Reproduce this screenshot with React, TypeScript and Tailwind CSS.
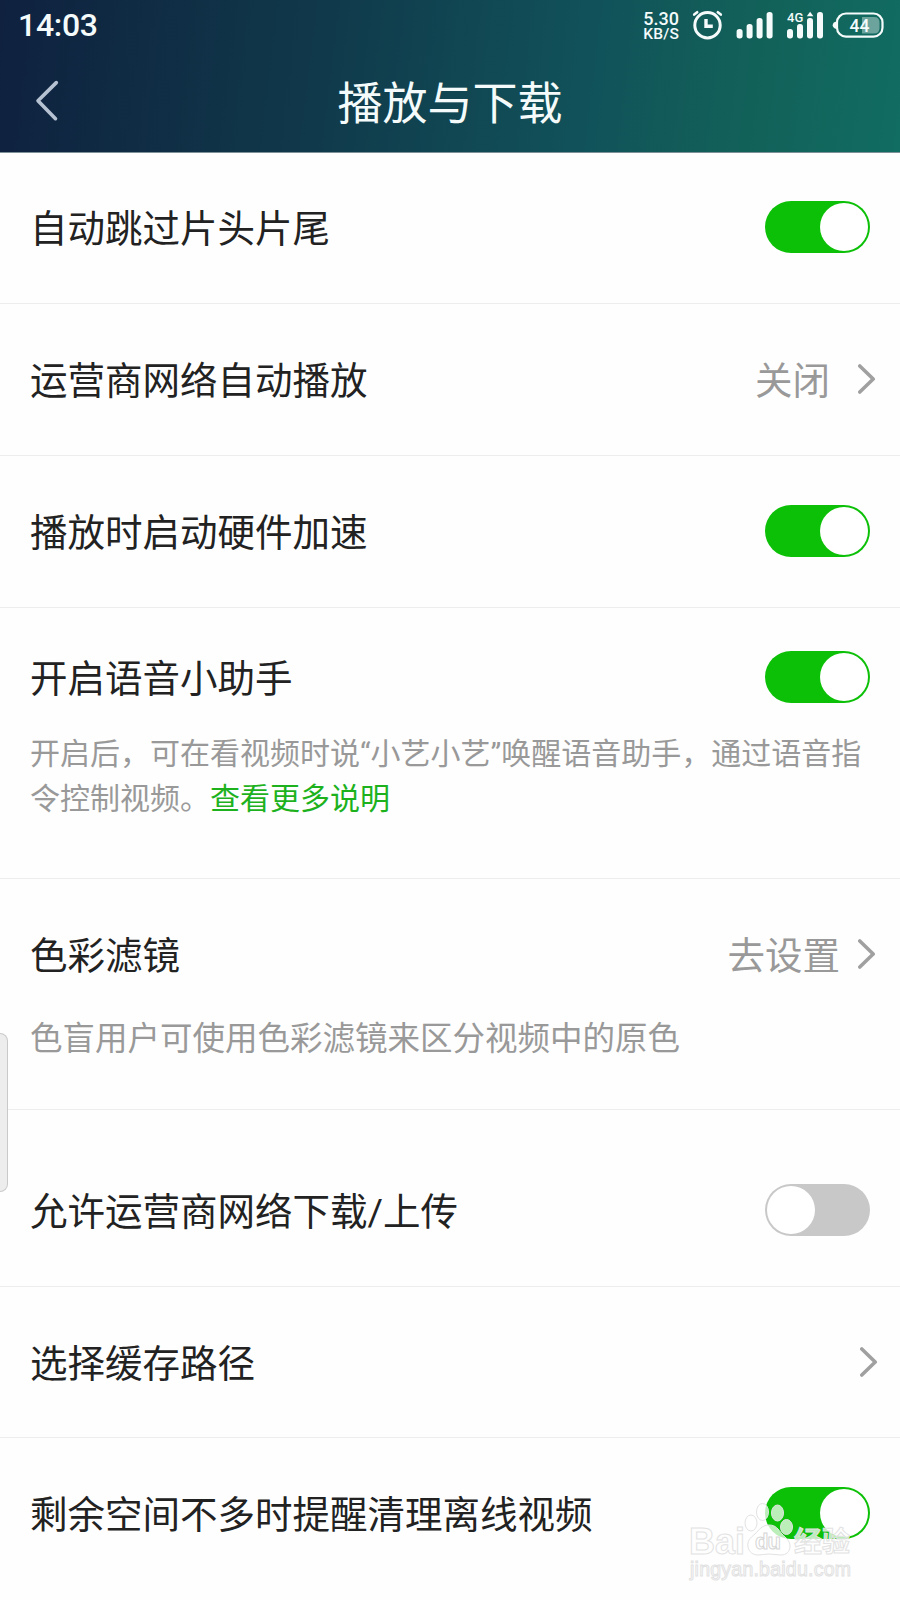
import { useState } from "react";
import type { ReactNode } from "react";

const SIGNAL_BARS = [
  { x: 0, y: 29, height: 9.5 },
  { x: 10, y: 24, height: 14.5 },
  { x: 20, y: 18, height: 20.5 },
  { x: 30, y: 12, height: 26.5 },
];

function Signal({ x }: { x: number }) {
  return (
    <g transform={`translate(${x} 0)`}>
      {SIGNAL_BARS.map((bar) => (
        <rect
          key={bar.x}
          x={bar.x}
          y={bar.y}
          width="6"
          height={bar.height}
          rx="2.7"
        />
      ))}
    </g>
  );
}

function StatusBar() {
  return (
    <div className="flex h-[50px] items-start justify-between pl-[18px]">
      <span className="mt-[6px] text-[32px] leading-[39px] font-medium tracking-[-0.3px]">
        14:03
      </span>
      <div className="flex">
        <div className="mt-[11px] mr-[11px] flex flex-col items-end text-right">
          <span className="text-[18px] leading-[15px] font-medium">5.30</span>
          <span className="text-[15.5px] leading-[16px] font-medium tracking-[0.2px]">
            KB/S
          </span>
        </div>
        <svg width="210" height="50" viewBox="690 0 210 50" fill="#f4fbfa">
          <circle
            cx="707.5"
            cy="25.2"
            r="12.7"
            fill="none"
            stroke="#f4fbfa"
            strokeWidth="3"
          />
          <path
            d="M706 19v7.2h6.800"
            fill="none"
            stroke="#f4fbfa"
            strokeWidth="3.4"
          />
          <path
            d="M694.2 14.6l3-2.4M720.8 14.6l-3-2.4"
            fill="none"
            stroke="#f4fbfa"
            strokeWidth="2.6"
            strokeLinecap="round"
          />
          <Signal x={736.6} />
          <Signal x={787} />
          <path d="M806.8 16.3l3.3-4.6 3.3 4.6z" />
          <text x="787" y="22" fontSize="13" fontWeight="500">
            4G
          </text>
          <rect
            x="837"
            y="13.5"
            width="45.5"
            height="23.2"
            rx="9"
            fill="none"
            stroke="#f4fbfa"
            strokeWidth="2.2"
          />
          <path d="M836.5 21.5v7.5q-3.8-1-3.8-3.8t3.8-3.7z" />
          <path
            d="M862 17h12q5.5 0 5.5 5.5v5.5q0 5.5-5.5 5.5h-12z"
            opacity="0.4"
          />
          <text x="849.5" y="32" fontSize="17.5" fontWeight="500">
            44
          </text>
        </svg>
      </div>
    </div>
  );
}

function Header() {
  return (
    <header className="h-[153px] border-b border-[#7d9298] bg-[linear-gradient(97deg,#0f213f_0%,#10384a_34%,#11525a_65%,#126159_83%,#116c61_100%)] text-[#f4fbfa]">
      <StatusBar />
      <div className="grid h-[102px] grid-cols-[100px_1fr_100px] items-center">
        <button type="button" aria-label="返回" className="pl-[35px]">
          <svg
            width="25"
            height="42"
            viewBox="0 0 25 42"
            fill="none"
            stroke="#b6c2d2"
            strokeWidth="3.6"
            strokeLinecap="round"
            strokeLinejoin="round"
          >
            <path d="M21.3 2.6L3 20.7l17.5 18" />
          </svg>
        </button>
        <h1 className="pt-[8px] text-center text-[45px] leading-[60px]">
          播放与下载
        </h1>
      </div>
    </header>
  );
}

function Toggle({ label, initial }: { label: string; initial: boolean }) {
  const [on, setOn] = useState(initial);
  return (
    <button
      type="button"
      role="switch"
      aria-checked={on}
      aria-label={label}
      onClick={() => setOn(!on)}
      className={`flex h-[52px] w-[105px] shrink-0 items-center rounded-full px-[2px] ${
        on ? "justify-end bg-[#0cc007]" : "justify-start bg-[#c8c8c8]"
      }`}
    >
      <span className="size-[48px] rounded-full bg-white" />
    </button>
  );
}

function Chevron() {
  return (
    <svg
      width="18"
      height="30"
      viewBox="0 0 18 30"
      fill="none"
      stroke="#a0a0a0"
      strokeWidth="3.6"
      strokeLinecap="round"
      strokeLinejoin="round"
    >
      <path d="M1.8 2L15.2 15L1.8 28" />
    </svg>
  );
}

type RowProps = {
  label: string;
  className: string;
  children: ReactNode;
  note?: ReactNode;
};

function Row({ label, className, children, note }: RowProps) {
  return (
    <section className={`border-b border-[#ededed] pl-[30px] ${className}`}>
      <div className="flex h-[52px] items-center justify-between">
        <h2 className="pt-[4px] text-[37.5px] leading-[52px] text-[#222]">
          {label}
        </h2>
        {children}
      </div>
      {note}
    </section>
  );
}

function Watermark() {
  return (
    <svg
      className="pointer-events-none absolute top-[1495px] left-[680px]"
      width="190"
      height="95"
      viewBox="680 1495 190 95"
      fill="#fff"
      fillOpacity="0.72"
      stroke="#e2e2e2"
      strokeWidth="1"
      fontFamily="'Liberation Sans', 'Noto Sans CJK SC', sans-serif"
    >
      <text
        x="689"
        y="1554"
        fontSize="37"
        fontWeight="700"
        textLength="56"
        lengthAdjust="spacingAndGlyphs"
      >
        Bai
      </text>
      <ellipse cx="751" cy="1523" rx="6" ry="8" />
      <ellipse cx="762.5" cy="1512" rx="6" ry="8.5" />
      <ellipse cx="777.5" cy="1513" rx="6" ry="8" />
      <ellipse cx="786.5" cy="1527" rx="6" ry="7.5" />
      <path d="M769 1525c-7 0-10 5-14 9-5 4-8 7-7 13 1 5 5 8 10 8 4 0 7-1 11-1s8 1 12 1c5 0 9-3 9-9 0-5-4-8-8-12-4-5-6-9-13-9z" />
      <text
        x="755"
        y="1549"
        fontSize="22"
        fontWeight="700"
        stroke="#d6d6d6"
        textLength="26"
      >
        du
      </text>
      <text x="794" y="1552" fontSize="28" fontWeight="700">
        经验
      </text>
      <text x="690" y="1576" fontSize="19.5" textLength="161">
        jingyan.baidu.com
      </text>
    </svg>
  );
}

export default function App() {
  return (
    <main
      lang="zh-CN"
      className="relative h-[1600px] w-[900px] overflow-hidden bg-[#fefefe] font-[Roboto,'Noto_Sans_CJK_SC',sans-serif]"
    >
      <Header />

      <Row label="自动跳过片头片尾" className="h-[151px] pt-[48px] pr-[30px]">
        <Toggle label="自动跳过片头片尾" initial={true} />
      </Row>
      <Row label="运营商网络自动播放" className="h-[152px] pt-[49px] pr-[24px]">
        <div className="flex items-center gap-[28px] text-[37.5px] leading-[52px] text-[#999]">
          <span className="pt-[4px]">关闭</span>
          <Chevron />
        </div>
      </Row>
      <Row label="播放时启动硬件加速" className="h-[152px] pt-[49px] pr-[30px]">
        <Toggle label="播放时启动硬件加速" initial={true} />
      </Row>
      <Row
        label="开启语音小助手"
        className="h-[271px] pt-[43px] pr-[30px]"
        note={
          <p className="mt-[28px] text-[30px] leading-[45px] whitespace-nowrap text-[#999]">
            开启后，可在看视频时说“小艺小艺”唤醒语音助手，通过语音指
            <br />
            令控制视频。
            <a href="#more" className="text-[#1db21d]">
              查看更多说明
            </a>
          </p>
        }
      >
        <Toggle label="开启语音小助手" initial={true} />
      </Row>
      <Row
        label="色彩滤镜"
        className="h-[231px] pt-[49px] pr-[24px]"
        note={
          <p className="mt-[37px] text-[32.5px] leading-[45px] text-[#999]">
            色盲用户可使用色彩滤镜来区分视频中的原色
          </p>
        }
      >
        <div className="flex items-center gap-[18px] text-[37.5px] leading-[52px] text-[#999]">
          <span className="pt-[4px]">去设置</span>
          <Chevron />
        </div>
      </Row>
      <Row
        label="允许运营商网络下载/上传"
        className="h-[177px] pt-[74px] pr-[30px]"
      >
        <Toggle label="允许运营商网络下载/上传" initial={false} />
      </Row>
      <Row label="选择缓存路径" className="h-[151px] pt-[49px] pr-[22px]">
        <Chevron />
      </Row>
      <Row
        label="剩余空间不多时提醒清理离线视频"
        className="h-[170px] pt-[49px] pr-[30px]"
      >
        <Toggle label="剩余空间不多时提醒清理离线视频" initial={true} />
      </Row>

      {/* edge handle of the system side panel */}
      <div className="absolute top-[1033px] left-0 h-[159px] w-[8px] rounded-r-[8px] border border-l-0 border-[#c9c9c9] bg-[#ededed]" />
      <Watermark />
    </main>
  );
}
